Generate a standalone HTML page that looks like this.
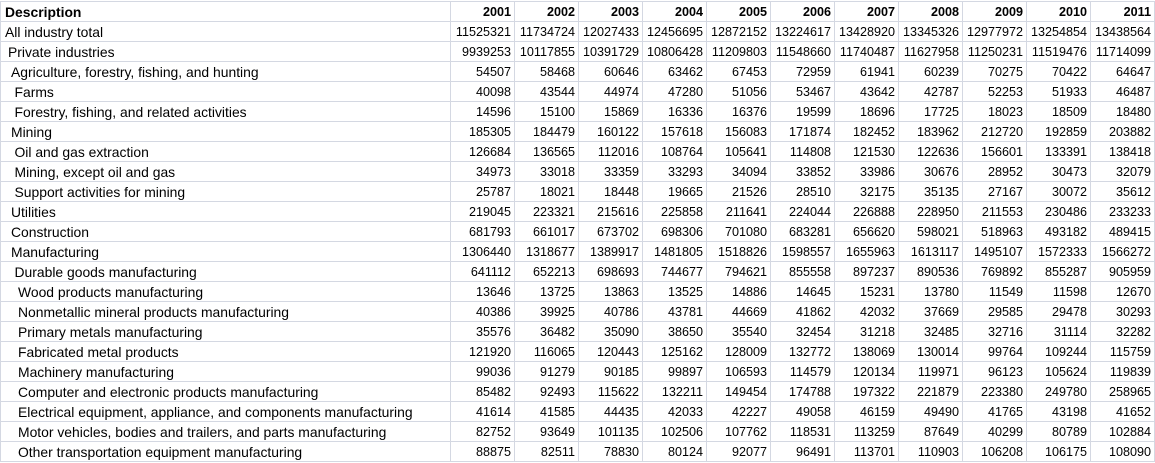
<!DOCTYPE html>
<html><head><meta charset="utf-8"><style>
html,body{margin:0;padding:0;background:#fff;width:1155px;height:463px;overflow:hidden}
table{position:absolute;left:0;top:1px;border-collapse:collapse;table-layout:fixed;font-family:"Liberation Sans",sans-serif;font-size:12.6px;color:#000}
td{border:1px solid #d4d8e2;height:19px;padding:1px 3px 0 0;box-sizing:border-box;text-align:right;white-space:nowrap;overflow:hidden;line-height:18px}
td:first-child{text-align:left;padding-right:0;font-size:13.9px}
tr.h td{font-weight:bold}
.l0{padding-left:4px!important}.l1{padding-left:7px!important}.l2{padding-left:10px!important}.l3{padding-left:13.5px!important}.l4{padding-left:17px!important}
</style></head><body>
<table>
<colgroup><col style="width:450px"><col span="11" style="width:64px"></colgroup>
<tr class="h"><td class="l0">Description</td><td>2001</td><td>2002</td><td>2003</td><td>2004</td><td>2005</td><td>2006</td><td>2007</td><td>2008</td><td>2009</td><td>2010</td><td>2011</td></tr>
<tr><td class="l0">All industry total</td><td>11525321</td><td>11734724</td><td>12027433</td><td>12456695</td><td>12872152</td><td>13224617</td><td>13428920</td><td>13345326</td><td>12977972</td><td>13254854</td><td>13438564</td></tr>
<tr><td class="l1">Private industries</td><td>9939253</td><td>10117855</td><td>10391729</td><td>10806428</td><td>11209803</td><td>11548660</td><td>11740487</td><td>11627958</td><td>11250231</td><td>11519476</td><td>11714099</td></tr>
<tr><td class="l2">Agriculture, forestry, fishing, and hunting</td><td>54507</td><td>58468</td><td>60646</td><td>63462</td><td>67453</td><td>72959</td><td>61941</td><td>60239</td><td>70275</td><td>70422</td><td>64647</td></tr>
<tr><td class="l3">Farms</td><td>40098</td><td>43544</td><td>44974</td><td>47280</td><td>51056</td><td>53467</td><td>43642</td><td>42787</td><td>52253</td><td>51933</td><td>46487</td></tr>
<tr><td class="l3">Forestry, fishing, and related activities</td><td>14596</td><td>15100</td><td>15869</td><td>16336</td><td>16376</td><td>19599</td><td>18696</td><td>17725</td><td>18023</td><td>18509</td><td>18480</td></tr>
<tr><td class="l2">Mining</td><td>185305</td><td>184479</td><td>160122</td><td>157618</td><td>156083</td><td>171874</td><td>182452</td><td>183962</td><td>212720</td><td>192859</td><td>203882</td></tr>
<tr><td class="l3">Oil and gas extraction</td><td>126684</td><td>136565</td><td>112016</td><td>108764</td><td>105641</td><td>114808</td><td>121530</td><td>122636</td><td>156601</td><td>133391</td><td>138418</td></tr>
<tr><td class="l3">Mining, except oil and gas</td><td>34973</td><td>33018</td><td>33359</td><td>33293</td><td>34094</td><td>33852</td><td>33986</td><td>30676</td><td>28952</td><td>30473</td><td>32079</td></tr>
<tr><td class="l3">Support activities for mining</td><td>25787</td><td>18021</td><td>18448</td><td>19665</td><td>21526</td><td>28510</td><td>32175</td><td>35135</td><td>27167</td><td>30072</td><td>35612</td></tr>
<tr><td class="l2">Utilities</td><td>219045</td><td>223321</td><td>215616</td><td>225858</td><td>211641</td><td>224044</td><td>226888</td><td>228950</td><td>211553</td><td>230486</td><td>233233</td></tr>
<tr><td class="l2">Construction</td><td>681793</td><td>661017</td><td>673702</td><td>698306</td><td>701080</td><td>683281</td><td>656620</td><td>598021</td><td>518963</td><td>493182</td><td>489415</td></tr>
<tr><td class="l2">Manufacturing</td><td>1306440</td><td>1318677</td><td>1389917</td><td>1481805</td><td>1518826</td><td>1598557</td><td>1655963</td><td>1613117</td><td>1495107</td><td>1572333</td><td>1566272</td></tr>
<tr><td class="l3">Durable goods manufacturing</td><td>641112</td><td>652213</td><td>698693</td><td>744677</td><td>794621</td><td>855558</td><td>897237</td><td>890536</td><td>769892</td><td>855287</td><td>905959</td></tr>
<tr><td class="l4">Wood products manufacturing</td><td>13646</td><td>13725</td><td>13863</td><td>13525</td><td>14886</td><td>14645</td><td>15231</td><td>13780</td><td>11549</td><td>11598</td><td>12670</td></tr>
<tr><td class="l4">Nonmetallic mineral products manufacturing</td><td>40386</td><td>39925</td><td>40786</td><td>43781</td><td>44669</td><td>41862</td><td>42032</td><td>37669</td><td>29585</td><td>29478</td><td>30293</td></tr>
<tr><td class="l4">Primary metals manufacturing</td><td>35576</td><td>36482</td><td>35090</td><td>38650</td><td>35540</td><td>32454</td><td>31218</td><td>32485</td><td>32716</td><td>31114</td><td>32282</td></tr>
<tr><td class="l4">Fabricated metal products</td><td>121920</td><td>116065</td><td>120443</td><td>125162</td><td>128009</td><td>132772</td><td>138069</td><td>130014</td><td>99764</td><td>109244</td><td>115759</td></tr>
<tr><td class="l4">Machinery manufacturing</td><td>99036</td><td>91279</td><td>90185</td><td>99897</td><td>106593</td><td>114579</td><td>120134</td><td>119971</td><td>96123</td><td>105624</td><td>119839</td></tr>
<tr><td class="l4">Computer and electronic products manufacturing</td><td>85482</td><td>92493</td><td>115622</td><td>132211</td><td>149454</td><td>174788</td><td>197322</td><td>221879</td><td>223380</td><td>249780</td><td>258965</td></tr>
<tr><td class="l4">Electrical equipment, appliance, and components manufacturing</td><td>41614</td><td>41585</td><td>44435</td><td>42033</td><td>42227</td><td>49058</td><td>46159</td><td>49490</td><td>41765</td><td>43198</td><td>41652</td></tr>
<tr><td class="l4">Motor vehicles, bodies and trailers, and parts manufacturing</td><td>82752</td><td>93649</td><td>101135</td><td>102506</td><td>107762</td><td>118531</td><td>113259</td><td>87649</td><td>40299</td><td>80789</td><td>102884</td></tr>
<tr><td class="l4">Other transportation equipment manufacturing</td><td>88875</td><td>82511</td><td>78830</td><td>80124</td><td>92077</td><td>96491</td><td>113701</td><td>110903</td><td>106208</td><td>106175</td><td>108090</td></tr>
</table>
</body></html>
